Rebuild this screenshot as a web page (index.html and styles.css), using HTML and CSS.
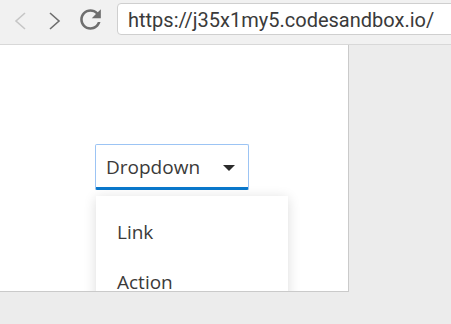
FILE: index.html
```html
<!DOCTYPE html>
<html lang="en-US">
<head>
  <meta charset="UTF-8">
  <title>Dropdown</title>
  <link rel="stylesheet" href="styles.css">
</head>
<body>
  <header class="toolbar">
    <svg class="nav back" width="14" height="20" viewBox="0 0 14 20"><polyline points="12,2 3,10 12,18"/></svg>
    <svg class="nav forward" width="14" height="20" viewBox="0 0 14 20"><polyline points="2,2 11,10 2,18"/></svg>
    <svg class="reload" width="31" height="31" viewBox="0 0 24 24"><path d="M17.65 6.35C16.2 4.9 14.21 4 12 4c-4.42 0-7.99 3.58-7.99 8s3.57 8 7.99 8c3.73 0 6.84-2.55 7.73-6h-2.08c-.82 2.33-3.04 4-5.65 4-3.31 0-6-2.69-6-6s2.69-6 6-6c1.66 0 3.14.69 4.22 1.78L13 11h7V4l-2.35 2.35z"/></svg>
    <div class="url">https://j35x1my5.codesandbox.io/</div>
  </header>
  <main class="frame">
    <div class="dropdown">
      <button class="dropdown-toggle">
        <span>Dropdown</span>
        <i class="caret"></i>
      </button>
      <ul class="menu">
        <li>Link</li>
        <li>Action</li>
      </ul>
    </div>
  </main>
</body>
</html>
```

FILE: styles.css
```css
html, body {
  margin: 0;
  height: 100%;
  overflow: hidden;
}
body {
  background: #ececec;
  font-family: "Open Sans", "Noto Sans", sans-serif;
}

/* browser chrome */
.toolbar {
  display: flex;
  align-items: center;
  height: 44px;
  background: #f1f1f1;
  border-bottom: 1px solid #d8d8d8;
  padding-left: 13px;
  overflow: hidden;
}
.toolbar > * { flex: none; }
.nav {
  fill: none;
  stroke-width: 1.6;
  margin-top: -2px;
}
.nav.back { stroke: #c6c6c6; }
.nav.forward { stroke: #6e6e6e; margin-left: 21px; }
.reload {
  fill: #6e6e6e;
  margin: -6px 0 0 13px;
}
.url {
  margin-left: 11px;
  margin-bottom: 6px;
  width: 420px;
  height: 29px;
  line-height: 30px;
  padding: 1px 0 0 10px;
  background: #fff;
  border: 1px solid #cfcfcf;
  border-radius: 4px;
  font-family: Roboto, "Liberation Sans", sans-serif;
  font-size: 20px;
  color: #3a3a3a;
  white-space: nowrap;
}

/* page viewport */
.frame {
  display: block;
  width: 349px;
  height: 247px;
  background: #fff;
  border-right: 1px solid #cacaca;
  border-bottom: 1px solid #cacaca;
  overflow: hidden;
  padding: 99px 0 0 95px;
  box-sizing: border-box;
}
.dropdown-toggle {
  display: flex;
  align-items: center;
  justify-content: space-between;
  width: 154px;
  height: 46px;
  padding: 2px 13px 0 10px;
  background: #fff;
  border: 1px solid #9cc4f4;
  border-bottom: 3px solid #0a78cc;
  border-radius: 2px;
  font: 19px "Open Sans", "Noto Sans", sans-serif;
  color: #3b3a39;
  box-sizing: border-box;
}
.caret {
  border-left: 6px solid transparent;
  border-right: 6px solid transparent;
  border-top: 6px solid #2b2b2b;
  margin-top: 1px;
}
.menu {
  list-style: none;
  margin: 6px 0 0 1px;
  padding: 11px 0 0;
  width: 192px;
  background: #fff;
  box-shadow: 0 2px 12px rgba(0, 0, 0, 0.14);
}
.menu li {
  padding-left: 21px;
  height: 50px;
  line-height: 50px;
  font-size: 19px;
  color: #3b3a39;
}
```
